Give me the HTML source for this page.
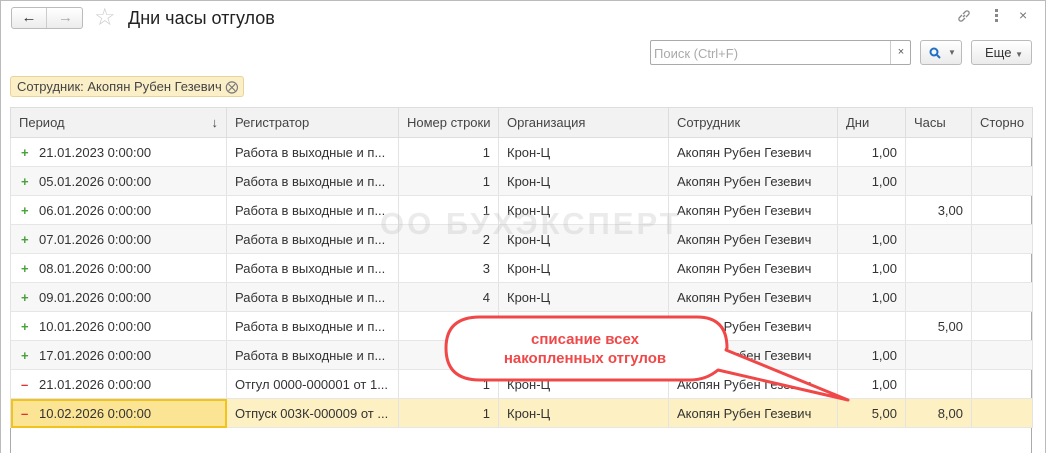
<!DOCTYPE html>
<html><head><meta charset="utf-8"><style>
*{box-sizing:border-box;margin:0;padding:0}
body{width:1046px;height:453px;background:#fff;font-family:"Liberation Sans",Arial,sans-serif;font-size:13px;color:#333;position:relative;overflow:hidden}
.win{position:absolute;left:0;top:0;width:1046px;height:453px;border:1px solid #bbb;border-bottom:none}
.nav{position:absolute;left:11px;top:7px;width:72px;height:22px;border:1px solid #bbb;border-radius:3px;background:linear-gradient(#fff,#ececec)}
.nav div{position:absolute;top:0;height:20px;width:35px;text-align:center;line-height:19px;font-size:15px}
.title{position:absolute;left:128px;top:8px;font-size:18px;color:#222}
.search{position:absolute;left:650px;top:40px;width:261px;height:25px;border:1px solid #aaa;border-radius:2px}
.search span{position:absolute;left:3px;top:5px;color:#aaa;font-size:13px}
.search i{position:absolute;left:239px;top:0;height:23px;border-left:1px solid #ccc;width:21px;text-align:center;font-style:normal;line-height:22px;font-size:11px;color:#555}
.btn{position:absolute;top:40px;height:25px;border:1px solid #bbb;border-radius:3px;background:linear-gradient(#fff,#ebebeb);line-height:23px;font-size:13px}
.chip{position:absolute;left:10px;top:76px;width:234px;height:21px;background:#fbefc8;border:1px solid #e6d49a;border-radius:3px;line-height:19px;padding-left:6px;color:#444}
table{position:absolute;left:10px;top:107px;width:1022px;border-collapse:collapse;table-layout:fixed}
td,th{height:29px;border:1px solid #e3e3e3;border-top:none;border-bottom:1px solid #e6e6e6;padding:0 8px;white-space:nowrap;overflow:hidden;font-weight:normal;text-align:left}
th{background:#f2f2f2;border:1px solid #ddd;color:#444;height:30px}
tr.g td{background:#f7f7f7}
tr.s td{background:#fdf1c3}
tr.s td.f{background:#fbe595;outline:2px solid #f2c31a;outline-offset:-2px}
.r{text-align:right}
.p{color:#4aa13b;font-weight:bold;display:inline-block;width:20px;padding-left:2px}
.m{color:#d33;font-weight:bold;display:inline-block;width:20px;padding-left:2px}
.frame{position:absolute;left:10px;top:107px;width:1022px;height:346px;border:1px solid #aaa;border-bottom:none}
.wm{position:absolute;left:380px;top:206px;font-size:31px;font-weight:bold;color:rgba(190,190,190,.3);letter-spacing:3px}
</style></head><body>
<div class="win"></div>
<div class="nav"><div style="left:0;border-right:1px solid #ccc">&#8592;</div><div style="left:36px;color:#aaa">&#8594;</div></div>
<div style="position:absolute;left:94px;top:3px;font-size:24px;color:#ccc">&#9734;</div>
<div class="title">Дни часы отгулов</div>
<svg style="position:absolute;left:956px;top:8px" width="16" height="16" viewBox="0 0 16 16" fill="none" stroke="#888" stroke-width="1.3"><path d="M7 9 L9 7"/><path d="M6 7 L3.5 9.5 a2 2 0 0 0 3 3 L9 10"/><path d="M10 9 L12.5 6.5 a2 2 0 0 0 -3 -3 L7 6"/></svg>
<div style="position:absolute;left:995px;top:9px;width:3px">
<div style="width:3px;height:3px;background:#888;margin-bottom:2px"></div><div style="width:3px;height:3px;background:#888;margin-bottom:2px"></div><div style="width:3px;height:3px;background:#888"></div></div>
<div style="position:absolute;left:1019px;top:7px;font-size:14px;color:#777">×</div>
<div class="search"><span>Поиск (Ctrl+F)</span><i>×</i></div>
<div class="btn" style="left:920px;width:42px">
<svg style="position:absolute;left:8px;top:6px" width="14" height="12" viewBox="0 0 14 12" fill="none" stroke="#1f6fc5" stroke-width="2"><circle cx="5" cy="5" r="3.5"/><path d="M8 8 L11 11"/></svg>
<span style="position:absolute;left:27px;top:0;color:#666;font-size:8px">▼</span></div>
<div class="btn" style="left:971px;width:61px;padding-left:13px">Еще <span style="color:#666;font-size:8px">▼</span></div>
<div class="chip">Сотрудник: Акопян Рубен Гезевич <span style="color:#777">&#10754;</span></div>
<div class="frame"></div>
<table>
<colgroup><col style="width:216px"><col style="width:172px"><col style="width:100px"><col style="width:170px"><col style="width:169px"><col style="width:68px"><col style="width:66px"><col style="width:61px"></colgroup>
<tr><th>Период<span style="float:right">&#8595;</span></th><th>Регистратор</th><th>Номер строки</th><th>Организация</th><th>Сотрудник</th><th>Дни</th><th>Часы</th><th>Сторно</th></tr>
<tr><td><span class="p">+</span>21.01.2023 0:00:00</td><td>Работа в выходные и п...</td><td class="r">1</td><td>Крон-Ц</td><td>Акопян Рубен Гезевич</td><td class="r">1,00</td><td></td><td></td></tr>
<tr class="g"><td><span class="p">+</span>05.01.2026 0:00:00</td><td>Работа в выходные и п...</td><td class="r">1</td><td>Крон-Ц</td><td>Акопян Рубен Гезевич</td><td class="r">1,00</td><td></td><td></td></tr>
<tr><td><span class="p">+</span>06.01.2026 0:00:00</td><td>Работа в выходные и п...</td><td class="r">1</td><td>Крон-Ц</td><td>Акопян Рубен Гезевич</td><td></td><td class="r">3,00</td><td></td></tr>
<tr class="g"><td><span class="p">+</span>07.01.2026 0:00:00</td><td>Работа в выходные и п...</td><td class="r">2</td><td>Крон-Ц</td><td>Акопян Рубен Гезевич</td><td class="r">1,00</td><td></td><td></td></tr>
<tr><td><span class="p">+</span>08.01.2026 0:00:00</td><td>Работа в выходные и п...</td><td class="r">3</td><td>Крон-Ц</td><td>Акопян Рубен Гезевич</td><td class="r">1,00</td><td></td><td></td></tr>
<tr class="g"><td><span class="p">+</span>09.01.2026 0:00:00</td><td>Работа в выходные и п...</td><td class="r">4</td><td>Крон-Ц</td><td>Акопян Рубен Гезевич</td><td class="r">1,00</td><td></td><td></td></tr>
<tr><td><span class="p">+</span>10.01.2026 0:00:00</td><td>Работа в выходные и п...</td><td class="r">1</td><td>Крон-Ц</td><td>Акопян Рубен Гезевич</td><td></td><td class="r">5,00</td><td></td></tr>
<tr class="g"><td><span class="p">+</span>17.01.2026 0:00:00</td><td>Работа в выходные и п...</td><td class="r">1</td><td>Крон-Ц</td><td>Акопян Рубен Гезевич</td><td class="r">1,00</td><td></td><td></td></tr>
<tr><td><span class="m">–</span>21.01.2026 0:00:00</td><td>Отгул 0000-000001 от 1...</td><td class="r">1</td><td>Крон-Ц</td><td>Акопян Рубен Гезевич</td><td class="r">1,00</td><td></td><td></td></tr>
<tr class="s"><td class="f"><span class="m">–</span>10.02.2026 0:00:00</td><td>Отпуск 003К-000009 от ...</td><td class="r">1</td><td>Крон-Ц</td><td>Акопян Рубен Гезевич</td><td class="r">5,00</td><td class="r">8,00</td><td></td></tr>
</table>
<div class="wm">ОО БУХЭКСПЕРТ</div>
<svg style="position:absolute;left:0;top:0" width="1046" height="453">
<path d="M480,317 L697,317 Q727,317 727,348 L726,350 L848,400 L718,370 Q706,380 690,380 L480,380 Q446,380 446,348 Q446,317 480,317 Z" fill="#fff" stroke="#f04848" stroke-width="3" stroke-linejoin="round"/>
<text x="585" y="344" text-anchor="middle" font-family="Liberation Sans" font-weight="bold" font-size="15" fill="#f04848">списание всех</text>
<text x="585" y="363" text-anchor="middle" font-family="Liberation Sans" font-weight="bold" font-size="15" fill="#f04848">накопленных отгулов</text>
</svg>
</body></html>
